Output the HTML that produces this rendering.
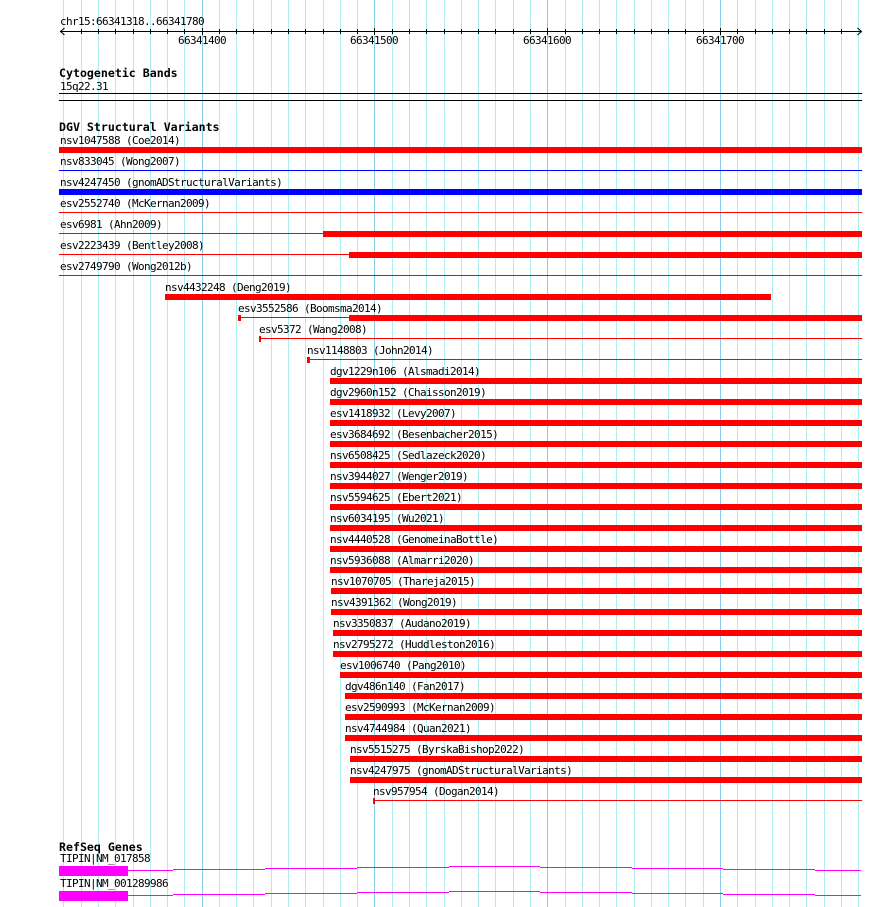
<!DOCTYPE html>
<html><head><meta charset="utf-8"><style>
html,body{margin:0;padding:0;background:#fff;width:890px;height:907px;overflow:hidden}
svg{display:block}
text{font-family:"DejaVu Sans Mono","Liberation Mono",monospace;font-size:11px;letter-spacing:-.62px;fill:#000;white-space:pre}
text.h{font-size:11.6px;font-weight:bold;letter-spacing:0}
</style></head><body>
<svg width="890" height="907" viewBox="0 0 890 907" xmlns="http://www.w3.org/2000/svg" shape-rendering="crispEdges">
<path stroke="#afeeee" fill="none" d="M63.5 0V907M81.5 0V907M98.5 0V907M115.5 0V907M133.5 0V907M150.5 0V907M167.5 0V907M184.5 0V907M219.5 0V907M236.5 0V907M253.5 0V907M271.5 0V907M288.5 0V907M305.5 0V907M323.5 0V907M340.5 0V907M357.5 0V907M392.5 0V907M409.5 0V907M426.5 0V907M444.5 0V907M461.5 0V907M478.5 0V907M495.5 0V907M513.5 0V907M530.5 0V907M565.5 0V907M582.5 0V907M599.5 0V907M616.5 0V907M634.5 0V907M651.5 0V907M668.5 0V907M685.5 0V907M703.5 0V907M737.5 0V907M755.5 0V907M772.5 0V907M789.5 0V907M806.5 0V907M824.5 0V907M841.5 0V907M858.5 0V907"/>
<path stroke="#87ceeb" fill="none" d="M202.5 0V907M374.5 0V907M547.5 0V907M720.5 0V907"/>
<path stroke="#000" fill="none" d="M60 31.5H861M64.5 28L60.5 31.5L64.5 35M857.5 28L861.5 31.5L857.5 35" shape-rendering="auto"/>
<path stroke="#000" fill="none" d="M81.5 29V34M98.5 29V34M115.5 29V34M133.5 29V34M150.5 29V34M167.5 29V34M184.5 29V34M202.5 28V35M219.5 29V34M236.5 29V34M253.5 29V34M271.5 29V34M288.5 29V34M305.5 29V34M323.5 29V34M340.5 29V34M357.5 29V34M374.5 28V35M392.5 29V34M409.5 29V34M426.5 29V34M444.5 29V34M461.5 29V34M478.5 29V34M495.5 29V34M513.5 29V34M530.5 29V34M547.5 28V35M565.5 29V34M582.5 29V34M599.5 29V34M616.5 29V34M634.5 29V34M651.5 29V34M668.5 29V34M685.5 29V34M703.5 29V34M720.5 28V35M737.5 29V34M755.5 29V34M772.5 29V34M789.5 29V34M806.5 29V34M824.5 29V34M841.5 29V34"/>
<rect x="59" y="93" width="803" height="1"/><rect x="59" y="100" width="803" height="1"/>
<g fill="#f00">
<rect x="59" y="147" width="803" height="6"/>
<rect x="59" y="212" width="803" height="1"/>
<rect x="59" y="233" width="264" height="1"/><rect x="323" y="231" width="539" height="6"/>
<rect x="59" y="254" width="290" height="1"/><rect x="349" y="252" width="513" height="6"/>
<rect x="59" y="275" width="803" height="1"/>
<rect x="165" y="294" width="606" height="6"/>
<rect x="238" y="315" width="3" height="6"/><rect x="241" y="317" width="108" height="1"/><rect x="349" y="315" width="513" height="6"/>
<rect x="259" y="336" width="2" height="6"/><rect x="261" y="338" width="601" height="1"/>
<rect x="307" y="357" width="3" height="6"/><rect x="310" y="359" width="552" height="1"/>
<rect x="330" y="378" width="532" height="6"/>
<rect x="330" y="399" width="532" height="6"/>
<rect x="330" y="420" width="532" height="6"/>
<rect x="330" y="441" width="532" height="6"/>
<rect x="330" y="462" width="532" height="6"/>
<rect x="330" y="483" width="532" height="6"/>
<rect x="330" y="504" width="532" height="6"/>
<rect x="330" y="525" width="532" height="6"/>
<rect x="330" y="546" width="532" height="6"/>
<rect x="330" y="567" width="532" height="6"/>
<rect x="331" y="588" width="531" height="6"/>
<rect x="331" y="609" width="531" height="6"/>
<rect x="333" y="630" width="529" height="6"/>
<rect x="333" y="651" width="529" height="6"/>
<rect x="340" y="672" width="522" height="6"/>
<rect x="345" y="693" width="517" height="6"/>
<rect x="345" y="714" width="517" height="6"/>
<rect x="345" y="735" width="517" height="6"/>
<rect x="350" y="756" width="512" height="6"/>
<rect x="350" y="777" width="512" height="6"/>
<rect x="373" y="798" width="2" height="6"/><rect x="375" y="800" width="487" height="1"/>
</g>
<g fill="#00f">
<rect x="59" y="170" width="803" height="1"/>
<rect x="59" y="189" width="803" height="6"/>
</g>
<g fill="#f0f">
<rect x="59" y="866" width="69" height="10"/>
<rect x="128" y="870" width="45" height="1"/><rect x="173" y="869" width="92" height="1"/><rect x="265" y="868" width="92" height="1"/><rect x="357" y="867" width="92" height="1"/><rect x="449" y="866" width="91" height="1"/><rect x="540" y="867" width="92" height="1"/><rect x="632" y="868" width="91" height="1"/><rect x="723" y="869" width="92" height="1"/><rect x="815" y="870" width="46" height="1"/>
<rect x="59" y="891" width="69" height="10"/>
<rect x="128" y="895" width="45" height="1"/><rect x="173" y="894" width="92" height="1"/><rect x="265" y="893" width="92" height="1"/><rect x="357" y="892" width="92" height="1"/><rect x="449" y="891" width="91" height="1"/><rect x="540" y="892" width="92" height="1"/><rect x="632" y="893" width="91" height="1"/><rect x="723" y="894" width="92" height="1"/><rect x="815" y="895" width="46" height="1"/>
</g>
<g shape-rendering="auto">
<text x="60" y="25">chr15:66341318..66341780</text>
<text x="178" y="44">66341400</text>
<text x="350" y="44">66341500</text>
<text x="523" y="44">66341600</text>
<text x="696" y="44">66341700</text>
<text class="h" x="59" y="77">Cytogenetic Bands</text>
<text x="60" y="90">15q22.31</text>
<text class="h" x="59" y="131">DGV Structural Variants</text>
<text x="60" y="144">nsv1047588 (Coe2014)</text>
<text x="60" y="165">nsv833045 (Wong2007)</text>
<text x="60" y="186">nsv4247450 (gnomADStructuralVariants)</text>
<text x="60" y="207">esv2552740 (McKernan2009)</text>
<text x="60" y="228">esv6981 (Ahn2009)</text>
<text x="60" y="249">esv2223439 (Bentley2008)</text>
<text x="60" y="270">esv2749790 (Wong2012b)</text>
<text x="165" y="291">nsv4432248 (Deng2019)</text>
<text x="238" y="312">esv3552586 (Boomsma2014)</text>
<text x="259" y="333">esv5372 (Wang2008)</text>
<text x="307" y="354">nsv1148803 (John2014)</text>
<text x="330" y="375">dgv1229n106 (Alsmadi2014)</text>
<text x="330" y="396">dgv2960n152 (Chaisson2019)</text>
<text x="330" y="417">esv1418932 (Levy2007)</text>
<text x="330" y="438">esv3684692 (Besenbacher2015)</text>
<text x="330" y="459">nsv6508425 (Sedlazeck2020)</text>
<text x="330" y="480">nsv3944027 (Wenger2019)</text>
<text x="330" y="501">nsv5594625 (Ebert2021)</text>
<text x="330" y="522">nsv6034195 (Wu2021)</text>
<text x="330" y="543">nsv4440528 (GenomeinaBottle)</text>
<text x="330" y="564">nsv5936088 (Almarri2020)</text>
<text x="331" y="585">nsv1070705 (Thareja2015)</text>
<text x="331" y="606">nsv4391362 (Wong2019)</text>
<text x="333" y="627">nsv3350837 (Audano2019)</text>
<text x="333" y="648">nsv2795272 (Huddleston2016)</text>
<text x="340" y="669">esv1006740 (Pang2010)</text>
<text x="345" y="690">dgv486n140 (Fan2017)</text>
<text x="345" y="711">esv2590993 (McKernan2009)</text>
<text x="345" y="732">nsv4744984 (Quan2021)</text>
<text x="350" y="753">nsv5515275 (ByrskaBishop2022)</text>
<text x="350" y="774">nsv4247975 (gnomADStructuralVariants)</text>
<text x="373" y="795">nsv957954 (Dogan2014)</text>
<text class="h" x="59" y="851">RefSeq Genes</text>
<text x="60" y="862">TIPIN|NM_017858</text>
<text x="60" y="887">TIPIN|NM_001289986</text>
</g>
</svg>
</body></html>
